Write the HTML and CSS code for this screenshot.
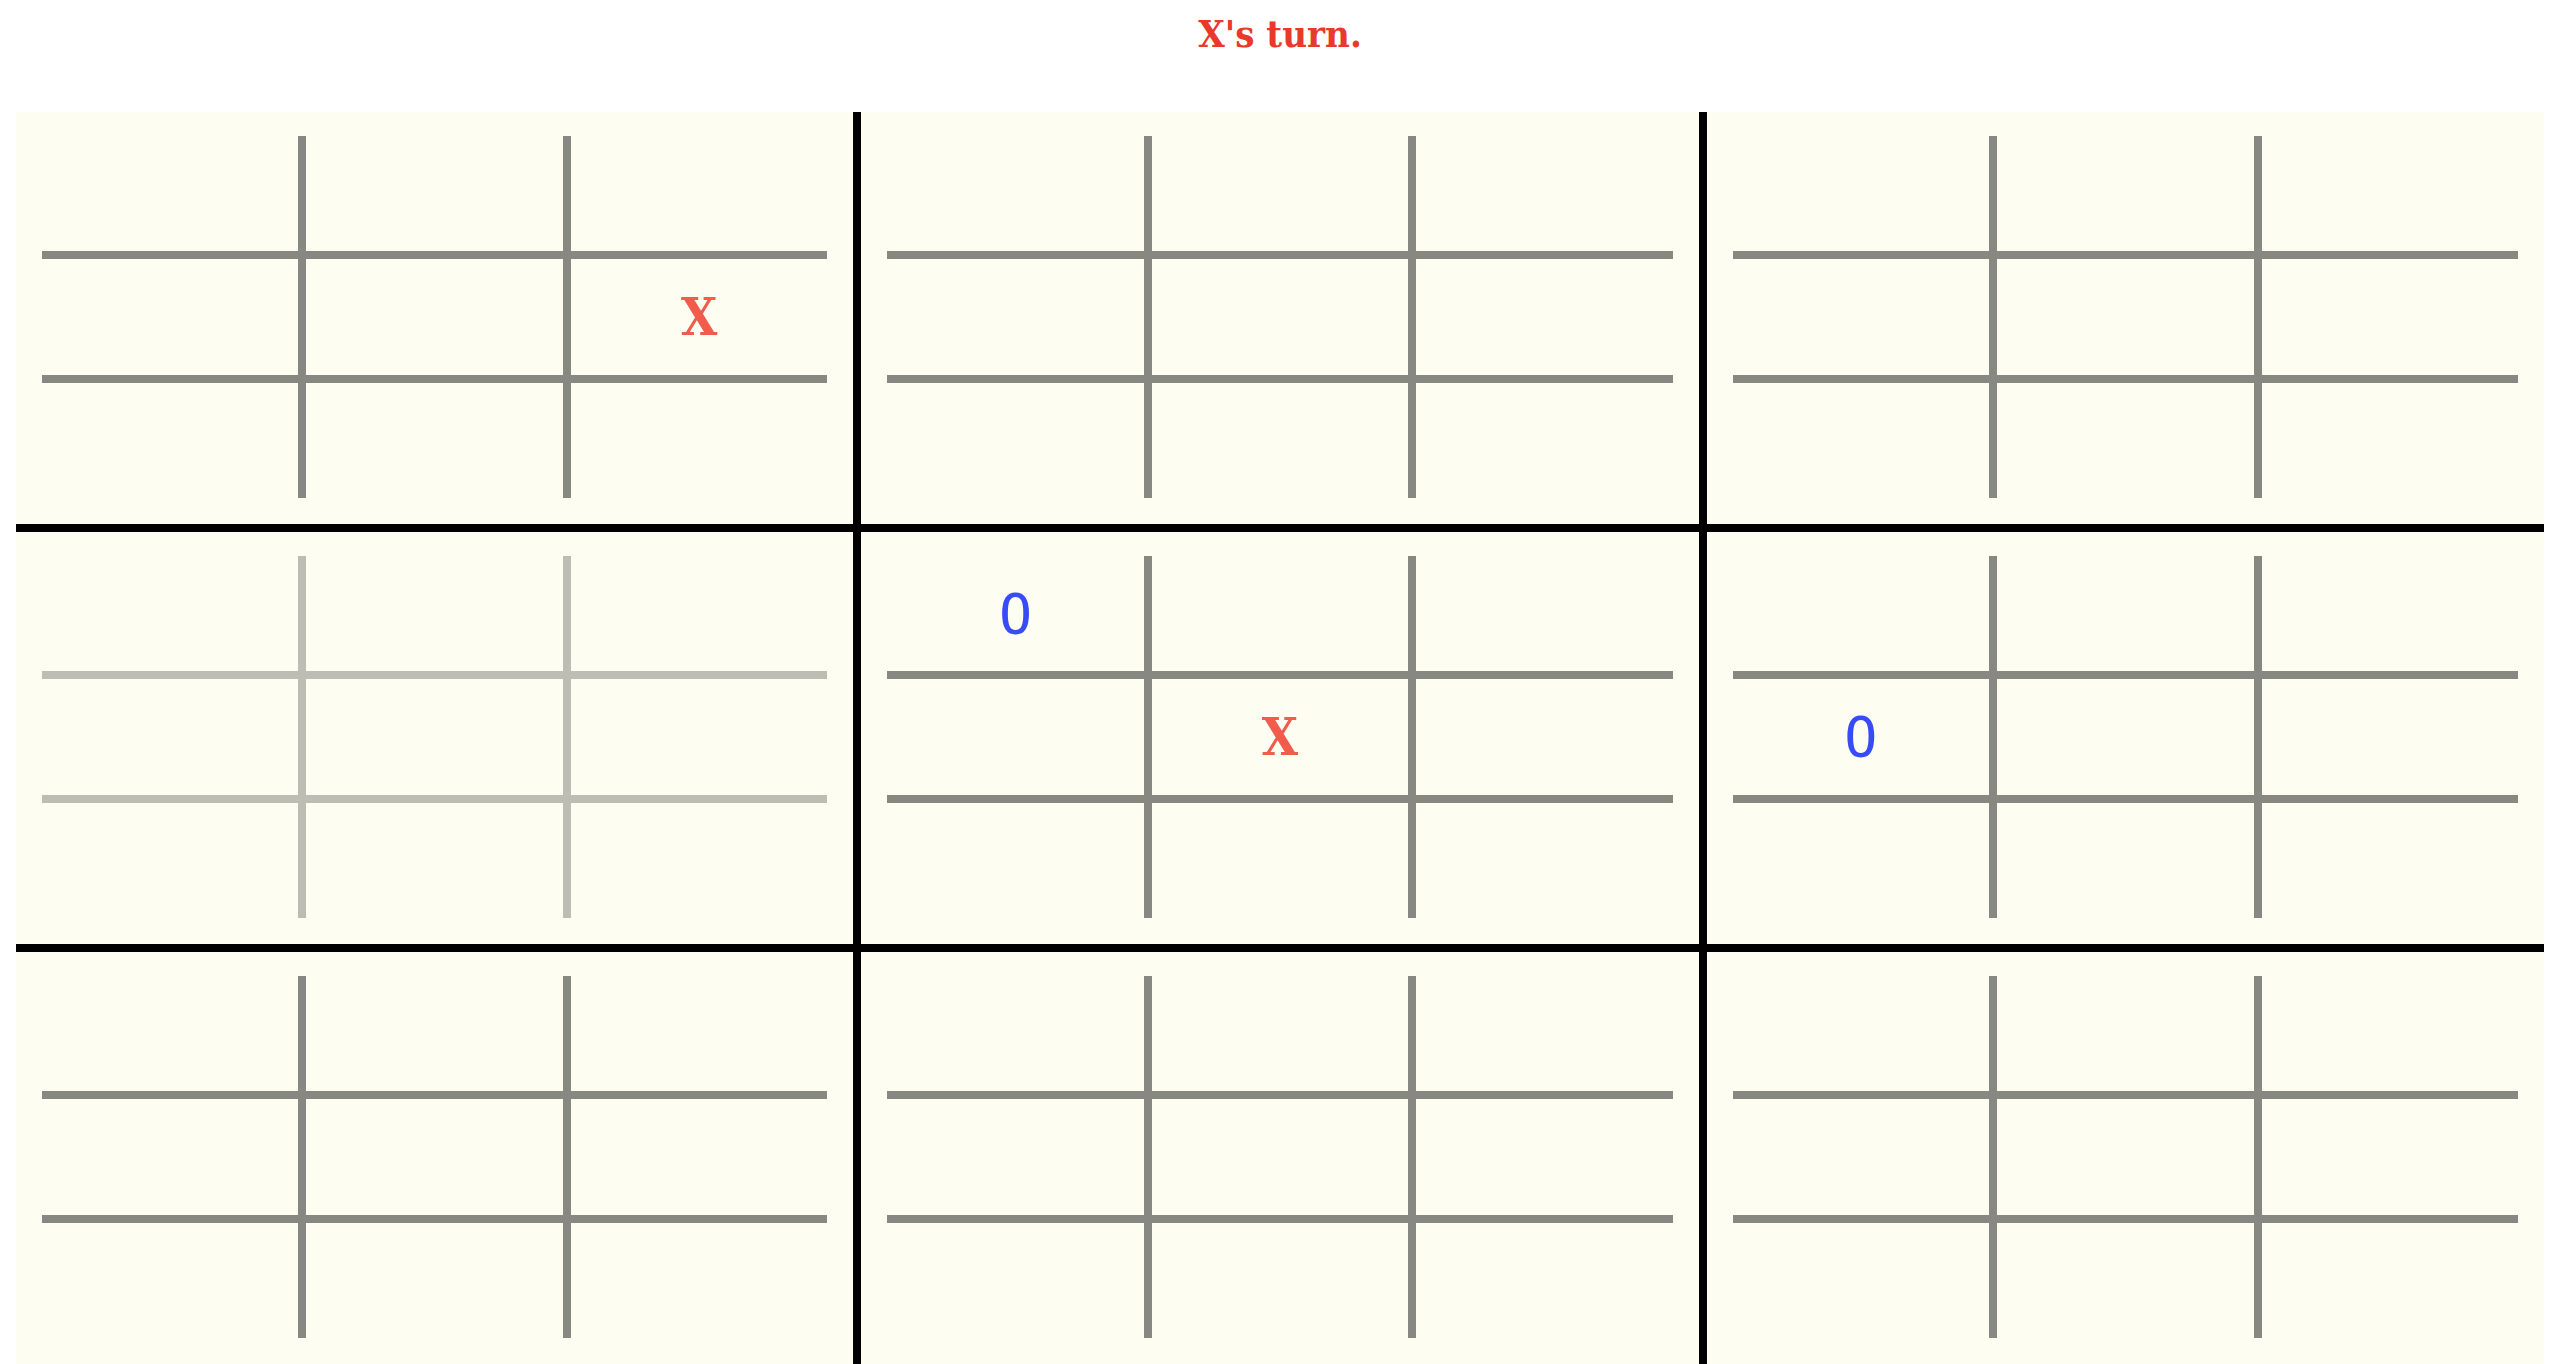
FILE: index.html
```html
<!DOCTYPE html>
<html lang="en">
<head>
    <meta charset="UTF-8">
    <meta name="viewport" content="width=device-width, initial-scale=1.0">
    <title>Ultimate Tic-Tac-Toe</title>
    <link rel="stylesheet" href="styles.css">
</head>
<body>
    <div class="status">X's turn.</div>

    <div class="board" id="board"></div>

    <script>
        // each string is one small board, "." = empty square
        const boards = [
            '.....X...', '.........', '.........',
            '.........', 'O...X....', '...O.....',
            '.........', '.........', '.........'
        ];
        const inactive = [3];

        const board = document.getElementById('board');

        boards.forEach((cells, i) => {
            const outer = document.createElement('div');
            outer.className = 'outer-cell';

            const small = document.createElement('div');
            small.className = 'small-board';
            if (inactive.includes(i)) small.classList.add('faded');

            cells.split('').forEach(mark => {
                const sq = document.createElement('div');
                sq.className = 'square';
                if (mark === 'X') sq.innerHTML = '<span class="mark-x">X</span>';
                if (mark === 'O') sq.innerHTML = '<span class="mark-o">O</span>';
                small.appendChild(sq);
            });

            outer.appendChild(small);
            board.appendChild(outer);
        });
    </script>
</body>
</html>
```

FILE: styles.css
```css
body {
    margin: 0;
    padding: 0 16px;
    background-color: #ffffff;
    font-family: "DejaVu Serif Condensed", "DejaVu Serif", serif;
}
.status {
    box-sizing: border-box;
    height: 112px;
    padding-top: 15px;
    text-align: center;
    font-size: 38px;
    line-height: 38px;
    font-weight: bold;
    font-stretch: condensed;
    color: #e8392a;
}
.board {
    display: grid;
    grid-template-columns: repeat(3, 1fr);
    grid-template-rows: repeat(3, 412px);
    gap: 8px;
    background-color: #000000;
}
.outer-cell {
    background-color: #fdfdf1;
    padding: 24px 26px 26px;
    display: flex;
}
.small-board {
    flex: 1;
    display: grid;
    grid-template-columns: repeat(3, 1fr);
    grid-template-rows: repeat(3, 1fr);
    gap: 8px;
    background-color: #888883;
}
.small-board.faded {
    background-color: #bebdb4;
}
.square {
    background-color: #fdfdf1;
    display: flex;
    align-items: center;
    justify-content: center;
}
.mark-x {
    font-family: "DejaVu Serif Condensed", "DejaVu Serif", serif;
    font-size: 52px;
    font-weight: bold;
    font-stretch: condensed;
    color: #f25c4c;
}
.mark-o {
    font-family: "DejaVu Sans Mono", monospace;
    font-size: 55px;
    color: #374cf5;
}
```
